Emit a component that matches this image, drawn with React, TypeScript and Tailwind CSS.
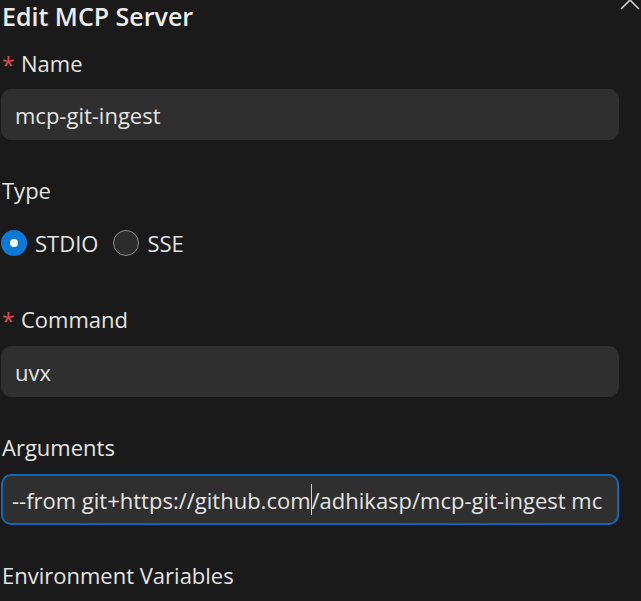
import React from "react";

function Label({ text, required, className = "" }: { text: string; required?: boolean; className?: string }) {
  return (
    <div className={"h-[28px] leading-[28px] text-[22px] text-[#e4e4e4] flex items-center " + className}>
      {required && (
        <span className="text-[#e2494f] text-[23px] w-[19px] relative top-[2px]">*</span>
      )}
      <span>{text}</span>
    </div>
  );
}

function TextBox({ children, focused, className = "" }: { children: React.ReactNode; focused?: boolean; className?: string }) {
  return (
    <div
      className={
        "w-[618px] h-[51px] rounded-[10px] bg-[#2f2f2f] overflow-hidden text-[22px] leading-[28px] text-[#e4e4e4] flex items-center " +
        (focused ? "border-2 border-[#1467b8]" : "border border-[#2f2f2f]") +
        " " +
        className
      }
    >
      <div className={"whitespace-nowrap flex items-center " + (focused ? "pl-[9px]" : "pl-[13px]")}>{children}</div>
    </div>
  );
}

export default function App() {
  return (
    <div
      className="relative w-[641px] h-[601px] overflow-hidden bg-[#1a1a1a] pl-[2px]"
      style={{ fontFamily: '"Open Sans", "Noto Sans", sans-serif' }}
    >
      <svg
        className="absolute left-[620px] top-[-10px]"
        width="20"
        height="20"
        viewBox="0 0 20 20"
        fill="none"
        stroke="#cfcfcf"
        strokeWidth="1.6"
      >
        <path d="M1 1 L19 19 M19 1 L1 19" />
      </svg>

      <div className="h-[32px] leading-[32px] text-[25px] font-semibold text-[#ececec]">Edit MCP Server</div>

      <Label text="Name" required className="mt-[17px]" />
      <TextBox className="mt-[12px] ml-[-1px]">mcp-git-ingest</TextBox>

      <Label text="Type" className="mt-[36px]" />
      <div className="mt-[25px] h-[28px] flex items-center text-[22px] text-[#e4e4e4] ml-[-1px]">
        <span className="w-[26px] h-[26px] rounded-full bg-[#0f78d4] flex items-center justify-center">
          <span className="w-[8px] h-[8px] rounded-full bg-white" />
        </span>
        <span className="ml-[8px] leading-[28px]">STDIO</span>
        <span className="ml-[15px] w-[26px] h-[26px] rounded-full bg-[#2c2c2c] border-[1.5px] border-[#8c8c8c]" />
        <span className="ml-[8px] leading-[28px]">SSE</span>
      </div>

      <Label text="Command" required className="mt-[48px]" />
      <TextBox className="mt-[13px] ml-[-1px]">uvx</TextBox>

      <Label text="Arguments" className="mt-[36px]" />
      <TextBox focused className="mt-[13px] ml-[-1px]">
        <span>--from git+https://github.com</span>
        <span className="inline-block w-[1px] h-[31px] bg-[#d0d0d0]" />
        <span>/adhikasp/mcp-git-ingest mc</span>
      </TextBox>

      <Label text="Environment Variables" className="mt-[36px]" />
    </div>
  );
}
